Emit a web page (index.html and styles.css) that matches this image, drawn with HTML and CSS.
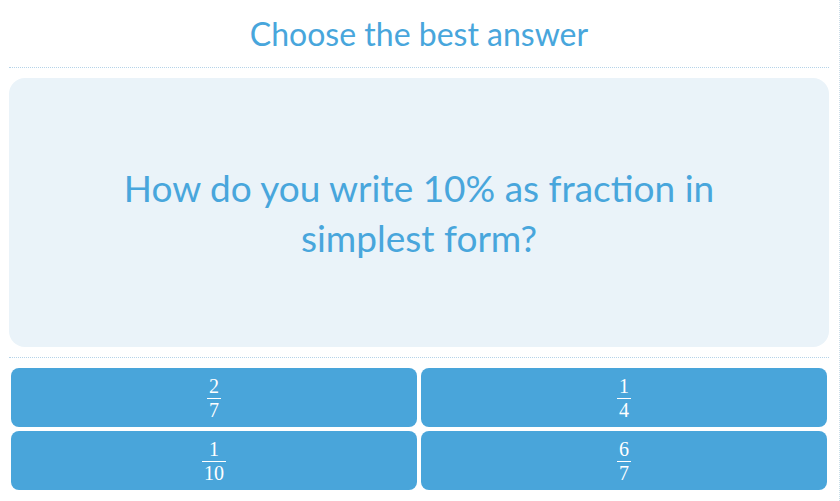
FILE: index.html
```html
<!DOCTYPE html>
<html lang="en">
<head>
  <meta charset="UTF-8" />
  <meta name="viewport" content="width=device-width, initial-scale=1.0"/>
  <title>Quiz</title>
  <link rel="stylesheet" href="styles.css">
</head>
<body>
  <div class="quiz">
    <h1 class="prompt">Choose the best answer</h1>

    <div class="question">
      <p>How do you write 10% as fraction in simplest form?</p>
    </div>

    <div class="answers">
      <button class="answer"><span class="frac"><span class="num">2</span><span class="den">7</span></span></button>
      <button class="answer"><span class="frac"><span class="num">1</span><span class="den">4</span></span></button>
      <button class="answer"><span class="frac"><span class="num">1</span><span class="den">10</span></span></button>
      <button class="answer"><span class="frac"><span class="num">6</span><span class="den">7</span></span></button>
    </div>
  </div>
</body>
</html>
```

FILE: styles.css
```css
* {
  margin: 0;
  padding: 0;
  box-sizing: border-box;
}

body {
  font-family: Lato, 'Open Sans', sans-serif;
  background-color: #ffffff;
  color: #48a6dc;
}

.quiz {
  width: 840px;
  height: 501px;
  padding: 0 10px 0 9px;
  border-right: 1px dotted #c9dde9;
  display: flex;
  flex-direction: column;
}

.prompt {
  height: 68px;
  padding-top: 14px;
  font-size: 32px;
  font-weight: normal;
  text-align: center;
  border-bottom: 1px dotted #b5d3e8;
}

.question {
  margin-top: 10px;
  height: 269px;
  background-color: #eaf3f9;
  border-radius: 16px;
  display: flex;
  align-items: center;
  justify-content: center;
  padding: 0 100px;
}

.question p {
  font-size: 37px;
  line-height: 50px;
  text-align: center;
}

.answers {
  margin-top: 10px;
  border-top: 1px dotted #b5d3e8;
  padding: 10px 2px 0;
  display: grid;
  grid-template-columns: 1fr 1fr;
  grid-auto-rows: 59px;
  gap: 4px 4px;
}

.answer {
  background-color: #49a5da;
  color: #ffffff;
  border: none;
  border-radius: 8px;
  display: flex;
  align-items: center;
  justify-content: center;
  cursor: pointer;
}

.frac {
  display: inline-flex;
  flex-direction: column;
  align-items: center;
  font-family: 'Liberation Serif', serif;
  font-size: 20px;
  line-height: 18px;
}

.num {
  padding: 0 2px 3px;
}

.den {
  padding: 2px 2px 0;
  border-top: 1px solid #ffffff;
  align-self: stretch;
  text-align: center;
}
```
